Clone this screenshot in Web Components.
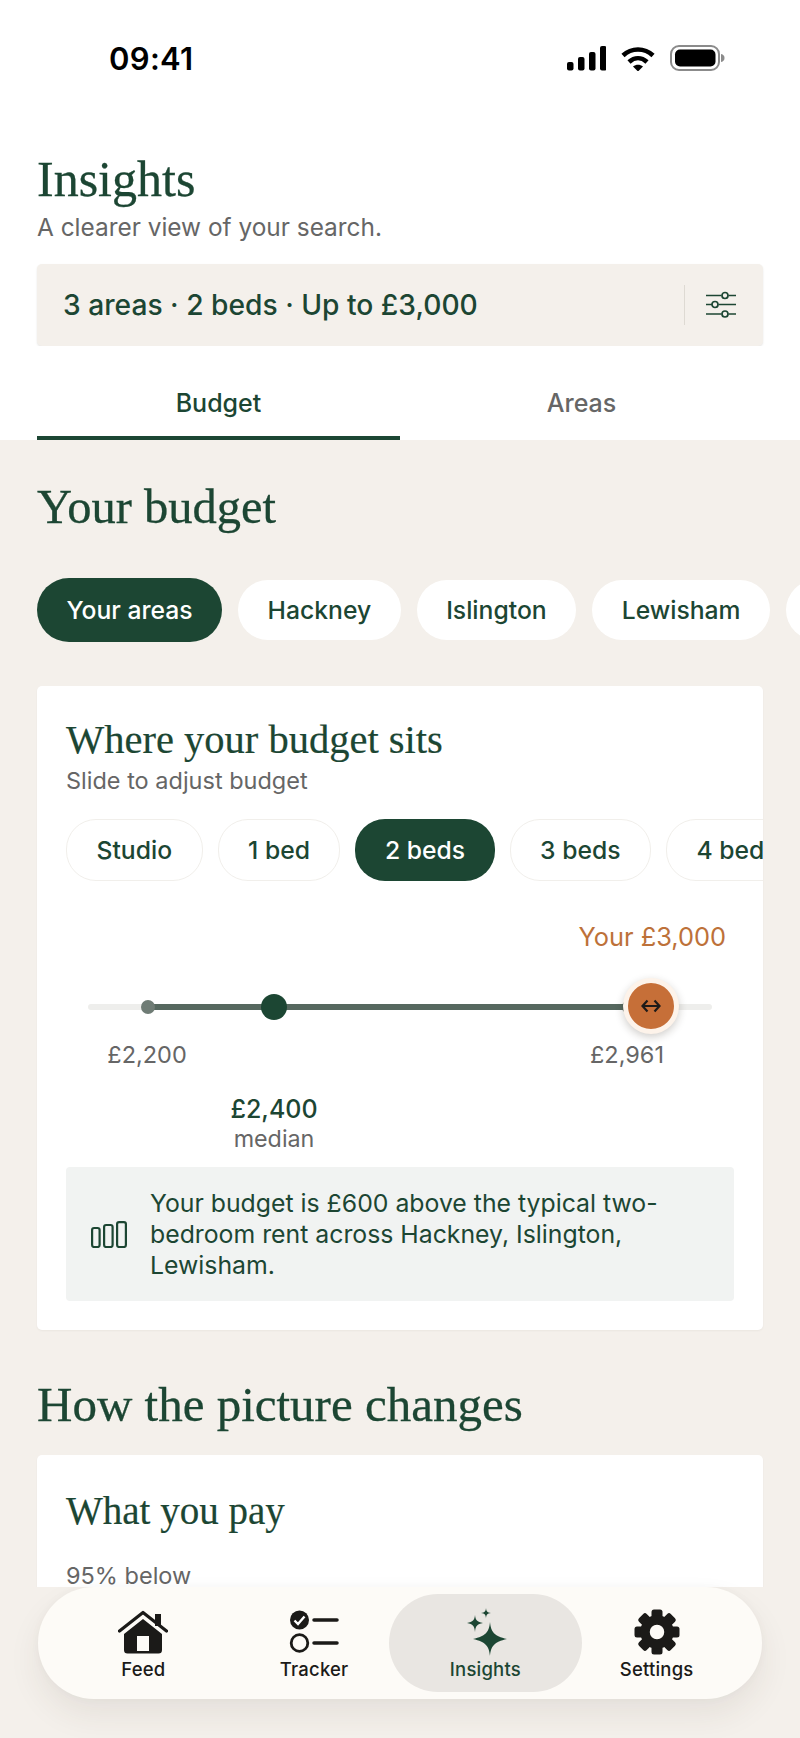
<!doctype html>
<html lang="en">
<head>
<meta charset="utf-8">
<title>Insights</title>
<style>
  html, body { margin: 0; padding: 0; background: #f4f0eb; }
  body { font-family: Inter, "Noto Sans", sans-serif; }
</style>
</head>
<body>
<insights-app></insights-app>

<script>
const GREEN = '#1c4633';
const SERIF = '"Liberation Serif", "DejaVu Serif", serif';

/* ------------------------------------------------------------------ */
/*  Small helper: every element sets its shadow markup the same way    */
/* ------------------------------------------------------------------ */
class Base extends HTMLElement {
  constructor() {
    super();
    this.attachShadow({ mode: 'open' });
  }
  connectedCallback() {
    this.shadowRoot.innerHTML = this.render();
  }
}

class StatusBar extends Base {
  render() {
    return `
      <style>
        :host { display: flex; justify-content: space-between; align-items: center; height: 116px;
                box-sizing: border-box; padding: 0 75px 0 109px; background: #fff; }
        .time { font: 600 31px/1 Inter, sans-serif; color: #000; letter-spacing: 0.3px; }
        .icons { display: flex; align-items: center; gap: 15px; }
        svg { display: block; }
      </style>
      <span class="time">09:41</span>
      <div class="icons">
        <svg width="39" height="25" viewBox="0 0 39 25">
          <rect x="0" y="16" width="6.5" height="8.5" rx="2"/>
          <rect x="11" y="11" width="6.5" height="13.5" rx="2"/>
          <rect x="22" y="6" width="6.5" height="18.5" rx="2"/>
          <rect x="33" y="0" width="6.5" height="24.5" rx="2"/>
        </svg>
        <svg width="34" height="25" viewBox="0 0 34 25">
          <path d="M2 9.5C10.500 1.500 23.500 1.500 32 9.500M8 16C13.500 11 20.500 11 26 16" fill="none" stroke="#000" stroke-width="4.600"/>
          <path d="M12 20.500C15 18 19 18 22 20.500L17 25.500Z"/>
        </svg>
        <svg width="55" height="26" viewBox="0 0 55 26">
          <rect x="1" y="1" width="48" height="24" rx="8" fill="none" stroke="#8b8b8b" stroke-width="2"/>
          <rect x="5" y="4.500" width="40.500" height="17" rx="5"/>
          <path d="M51 9C53.500 9.500 54.500 11 54.500 13C54.500 15 53.500 16.500 51 17Z" fill="#8b8b8b"/>
        </svg>
      </div>
    `;
  }
}

class FilterSummary extends Base {
  render() {
    return `
      <style>
        :host { display: flex; align-items: center; height: 82px; box-sizing: border-box; padding: 0 27px 0 26px;
                background: #f4f0eb; border-radius: 5px; box-shadow: 0 1px 2px rgba(60,50,40,.12); }
        .label { flex: 1; font: 450 28.200px/1 Inter, sans-serif; color: ${GREEN}; }
        .div { width: 1px; height: 40px; background: #dedad3; margin-right: 21px; }
        svg { display: block; }
      </style>
      <span class="label"><slot></slot></span>
      <span class="div"></span>
      <svg width="30" height="28" viewBox="0 0 30 28" fill="none" stroke="${GREEN}" stroke-width="1.700">
        <path d="M0 4.500H15.500M22.500 4.500H30M0 13.500H6M12.500 13.500H30M0 23H15.500M22.500 23H30"/>
        <circle cx="19" cy="4.500" r="3"/><circle cx="9" cy="13.500" r="3"/><circle cx="19" cy="23" r="3"/>
      </svg>
    `;
  }
}

class TabBar extends Base {
  render() {
    return `
      <style>
        :host { display: flex; padding: 0 37px; background: #fff; height: 94px; box-sizing: border-box; }
        div { width: 363px; text-align: center; padding-top: 42px; box-sizing: border-box;
              font: 500 25px/30px Inter, sans-serif; color: #666; }
        .on { color: ${GREEN}; border-bottom: 4px solid ${GREEN}; }
      </style>
      <div class="on">Budget</div>
      <div>Areas</div>
    `;
  }
}

class ChipPill extends Base {
  render() {
    const on = this.hasAttribute('active');
    const outline = this.hasAttribute('outline');
    return `
      <style>
        :host { display: block; flex: none; }
        div { display: flex; align-items: center; height: ${outline ? 62 : 60}px; box-sizing: border-box;
              min-width: 60px; padding: 0 29.500px; border-radius: 30px; white-space: nowrap;
              background: ${on ? GREEN : '#fff'}; color: ${on ? '#fff' : GREEN};
              font: 500 24.700px/1 Inter, sans-serif;
              ${on && !outline ? 'height: 64px; border-radius: 32px;' : ''}
              ${outline && !on ? 'border: 1px solid #f1efeb;' : ''} }
      </style>
      <div><slot></slot></div>
    `;
  }
}

class ChipRow extends Base {
  render() {
    return `
      <style>
        :host { display: flex; align-items: center; gap: ${this.getAttribute('gap') || 16}px; overflow: hidden; }
      </style>
      <slot></slot>
    `;
  }
}

class ContentCard extends Base {
  render() {
    return `
      <style>
        :host { display: block; background: #fff; border-radius: 5px; padding: var(--card-top, 31px) 29px 29px;
                box-shadow: 0 1px 2px rgba(60,50,40,.05); }
        h3 { margin: 0; font: 400 var(--card-title, 40.500px)/46px ${SERIF}; color: ${GREEN}; -webkit-text-stroke: .2px ${GREEN}; }
      </style>
      <h3>${this.getAttribute('heading')}</h3>
      <slot></slot>
    `;
  }
}

class BudgetSlider extends Base {
  render() {
    return `
      <style>
        :host { display: block; position: relative; height: 286px; color: #666;
                font-family: Inter, sans-serif; }
        .you { position: absolute; right: 8px; top: 41px; font: 400 25.400px/30px Inter, sans-serif; color: #bd7139; }
        .track { position: absolute; left: 22px; right: 22px; top: 123px; height: 6px; background: #eeeeec; border-radius: 3px; }
        .fill { position: absolute; left: 82px; width: 480px; top: 123px; height: 6px; background: #56685f; }
        .min { position: absolute; left: 75px; top: 119px; width: 14px; height: 14px; border-radius: 50%; background: #6f7c75; }
        .end { position: absolute; left: 556px; top: 119px; width: 14px; height: 14px; border-radius: 50%; background: #56685f; }
        .med { position: absolute; left: 195px; top: 113px; width: 26px; height: 26px; border-radius: 50%; background: ${GREEN}; }
        .thumb { position: absolute; left: 557px; top: 97px; width: 56px; height: 56px; box-sizing: border-box;
                 border: 5px solid #fdf3ea; border-radius: 50%; background: #c66f38;
                 box-shadow: 0 3px 9px rgba(40,30,20,.22); display: flex; align-items: center; justify-content: center; }
        .lbl { position: absolute; transform: translateX(-50%); white-space: nowrap; }
        .v { font: 400 23.500px/28px Inter, sans-serif; top: 160px; }
        .medv { font: 500 25px/30px Inter, sans-serif; color: ${GREEN}; left: 208px; top: 213px; }
        .medc { font: 400 23.300px/28px Inter, sans-serif; left: 208px; top: 244px; }
        svg { display: block; }
      </style>
      <div class="you">Your £3,000</div>
      <div class="track"></div>
      <div class="fill"></div>
      <div class="min"></div>
      <div class="end"></div>
      <div class="med"></div>
      <div class="thumb">
        <svg width="20" height="14" viewBox="0 0 20 14" fill="none" stroke="#1d1a18" stroke-width="2.200">
          <path d="M1.500 7H18.500M6.500 1.500L1.500 7L6.500 12.500M13.500 1.500L18.500 7L13.500 12.500"/>
        </svg>
      </div>
      <div class="lbl v" style="left:81px">£2,200</div>
      <div class="lbl v" style="left:561px">£2,961</div>
      <div class="lbl medv">£2,400</div>
      <div class="lbl medc">median</div>
    `;
  }
}

class NoteBox extends Base {
  render() {
    return `
      <style>
        :host { display: flex; align-items: center; gap: 23px; height: 134px; box-sizing: border-box;
                padding: 0 20px 0 25px; background: #f1f3f2; border-radius: 4px; }
        svg { display: block; flex: none; }
        p { margin: 0; font: 400 24.800px/31px Inter, sans-serif; color: ${GREEN}; }
      </style>
      <svg width="36" height="27" viewBox="0 0 36 27" fill="none" stroke="${GREEN}" stroke-width="2.200">
        <rect x="1.100" y="7" width="7.500" height="19" rx="2"/>
        <rect x="13.100" y="4" width="8.500" height="22" rx="2"/>
        <rect x="26.100" y="1.100" width="8.800" height="24.900" rx="2"/>
      </svg>
      <p><slot></slot></p>
    `;
  }
}

class NavItem extends Base {
  render() {
    const on = this.hasAttribute('active');
    return `
      <style>
        :host { display: flex; flex-direction: column; align-items: center; box-sizing: border-box;
                width: 171px; height: 98px; padding-top: 13px; border-radius: 49px;
                ${on ? 'background: #e9e6e2; width: 194px; margin: 0 -11px;' : ''} }
        .ic { height: 50px; display: flex; align-items: center; justify-content: center; }
        span { font: 500 18.500px/24px Inter, sans-serif; color: ${on ? GREEN : '#1b1a18'}; letter-spacing: .2px; }
      </style>
      <div class="ic"><slot></slot></div>
      <span>${this.getAttribute('label')}</span>
    `;
  }
}

class BottomNav extends Base {
  render() {
    const gearTeeth = [0, 45, 90, 135, 180, 225, 270, 315]
      .map((a) => `<rect x="-5.500" y="-22.500" width="11" height="10" rx="2.500" transform="rotate(${a})"/>`)
      .join('');
    return `
      <style>
        :host { display: block; height: 151px; box-sizing: border-box; padding: 0 38px; position: relative; z-index: 2; }
        nav { display: flex; align-items: center; justify-content: space-between; height: 112px; box-sizing: border-box;
              padding: 0 20px; background: #fdfbf7; border-radius: 56px;
              box-shadow: 0 16px 32px rgba(60,50,40,.08), 0 0 10px rgba(60,50,40,.03); }
        svg { display: block; }
      </style>
      <nav>
        <nav-item label="Feed">
          <svg width="50" height="44" viewBox="0 0 50 44" fill="#1b1a18">
            <path d="M1.500 21L25 2.500L48.500 21" fill="none" stroke="#1b1a18" stroke-width="3.200" stroke-linecap="round" stroke-linejoin="round"/>
            <rect x="37" y="4" width="6" height="12"/>
            <path fill-rule="evenodd" d="M25 9L44 24V40Q44 43.500 40.500 43.500H9.500Q6 43.500 6 40V24ZM19 26V41H31V26Z"/>
          </svg>
        </nav-item>
        <nav-item label="Tracker">
          <svg width="50" height="44" viewBox="0 0 50 44">
            <circle cx="10.500" cy="10" r="9.500" fill="#1b1a18"/>
            <path d="M5.500 10.500L9 14L15.500 6.500" fill="none" stroke="#fff" stroke-width="2.400"/>
            <circle cx="10.500" cy="33" r="8.300" fill="none" stroke="#1b1a18" stroke-width="2.800"/>
            <path d="M25 10H48M25 33H48" stroke="#1b1a18" stroke-width="3.500" stroke-linecap="round"/>
          </svg>
        </nav-item>
        <nav-item label="Insights" active>
          <svg width="50" height="48" viewBox="0 0 50 48" fill="${GREEN}">
            <path d="M30 14C31 24 34 28 47 31C34 34 31 38 30 48C29 38 26 34 13 31C26 28 29 24 30 14Z"/>
            <path d="M15 7C15.500 12 17 14 23 15C17 16 15.500 18 15 24C14.500 18 13 16 7 15C13 14 14.500 12 15 7Z"/>
            <path d="M26 0C26.300 3 27 4.700 31 5C27 5.300 26.300 7 26 10.500C25.700 7 25 5.300 21 5C25 4.700 25.700 3 26 0Z"/>
          </svg>
        </nav-item>
        <nav-item label="Settings">
          <svg width="46" height="46" viewBox="-23 -23 46 46" fill="#1b1a18">
            ${gearTeeth}
            <circle r="12" fill="none" stroke="#1b1a18" stroke-width="9.500"/>
          </svg>
        </nav-item>
      </nav>
    `;
  }
}

class InsightsApp extends Base {
  render() {
    return `
      <style>
        :host { display: flex; flex-direction: column; height: 1738px; overflow: hidden; background: #f4f0eb;
                font-family: Inter, sans-serif; }
        .top { background: #fff; padding: 34px 37px 0; }
        h1 { margin: 0; font: 400 50px/58px ${SERIF}; color: ${GREEN}; -webkit-text-stroke: .3px ${GREEN}; }
        .sub { font: 400 24.400px/30px Inter, sans-serif; color: #666; margin: 4px 0 22px; }
        main { flex: 1; min-height: 0; overflow: hidden; padding: 0 37px; display: block; }
        h2 { margin: 0; font: 400 48.500px/60px ${SERIF}; color: ${GREEN}; -webkit-text-stroke: .3px ${GREEN}; }
        .h-budget { margin-top: 37px; }
        .page-chips { margin: 41px -37px 44px 0; }
        .h-changes { font-size: 49px; margin: 45px 0 20px; }
        .hint { font: 400 23.500px/30px Inter, sans-serif; color: #666; margin-top: 3px; }
        .card-chips { margin: 23px -29px 0 0; }
        .card-pay { --card-top: 33px; --card-title: 39px; padding-bottom: 120px; }
        .hint.pay { margin-top: 30px; line-height: 24px; }
      </style>
      <status-bar></status-bar>
      <div class="top">
        <h1>Insights</h1>
        <div class="sub">A clearer view of your search.</div>
        <filter-summary>3 areas · 2 beds · Up to £3,000</filter-summary>
      </div>
      <tab-bar></tab-bar>
      <main>
        <h2 class="h-budget">Your budget</h2>
        <chip-row class="page-chips" gap="16">
          <chip-pill active>Your areas</chip-pill>
          <chip-pill>Hackney</chip-pill>
          <chip-pill>Islington</chip-pill>
          <chip-pill>Lewisham</chip-pill>
          <chip-pill></chip-pill>
        </chip-row>
        <content-card heading="Where your budget sits">
          <div class="hint">Slide to adjust budget</div>
          <chip-row class="card-chips" gap="15">
            <chip-pill outline>Studio</chip-pill>
            <chip-pill outline>1 bed</chip-pill>
            <chip-pill outline active>2 beds</chip-pill>
            <chip-pill outline>3 beds</chip-pill>
            <chip-pill outline>4 beds</chip-pill>
          </chip-row>
          <budget-slider></budget-slider>
          <note-box>Your budget is £600 above the typical two-bedroom rent across Hackney, Islington, Lewisham.</note-box>
        </content-card>
        <h2 class="h-changes">How the picture changes</h2>
        <content-card class="card-pay" heading="What you pay">
          <div class="hint pay">95% below</div>
        </content-card>
      </main>
      <bottom-nav></bottom-nav>
    `;
  }
}

customElements.define('status-bar', StatusBar);
customElements.define('filter-summary', FilterSummary);
customElements.define('tab-bar', TabBar);
customElements.define('chip-pill', ChipPill);
customElements.define('chip-row', ChipRow);
customElements.define('content-card', ContentCard);
customElements.define('budget-slider', BudgetSlider);
customElements.define('note-box', NoteBox);
customElements.define('nav-item', NavItem);
customElements.define('bottom-nav', BottomNav);
customElements.define('insights-app', InsightsApp);
</script>
</body>
</html>
